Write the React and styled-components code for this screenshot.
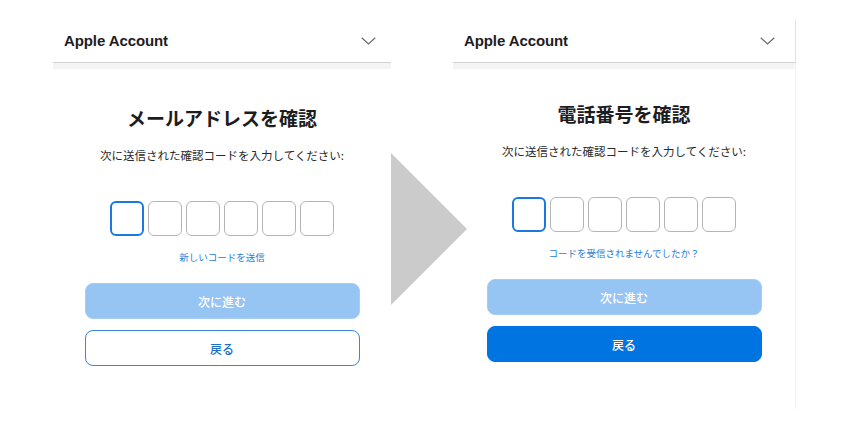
import styled, { createGlobalStyle } from "styled-components";

const GlobalStyle = createGlobalStyle`
    body {
        margin: 0;
        background: #ffffff;
        font-family: "Liberation Sans", "Noto Sans CJK JP", sans-serif;
    }
`

const screens = [
    {
        title: "メールアドレスを確認",
        link: "新しいコードを送信",
        top: 35,
        width: 338,
        padRight: 15,
        edge: false,
        backFilled: false,
    },
    {
        title: "電話番号を確認",
        link: "コードを受信されませんでしたか？",
        top: 31,
        width: 343,
        padRight: 20,
        edge: true,
        backFilled: true,
    },
];

function Chevron() {
    return (
        <svg width="15" height="8" viewBox="0 0 15 8">
            <path d="M0.7 0.7 L7.5 7 L14.3 0.7" fill="none" stroke="#6b6b6b" strokeWidth="1.2" />
        </svg>
    )
}

function Screen({ data }) {
    return (
        <Panel $width={data.width}>
            <Header $padRight={data.padRight} $edge={data.edge}>
                <Brand>Apple Account</Brand>
                <Chevron />
            </Header>
            <Band />
            <Body $top={data.top} $edge={data.edge}>
                <Title>{data.title}</Title>
                <Subtitle>次に送信された確認コードを入力してください:</Subtitle>
                <Codes>
                    {[0, 1, 2, 3, 4, 5].map((i) => (
                        <CodeBox key={i} $active={i === 0} />
                    ))}
                </Codes>
                <Link>{data.link}</Link>
                <Buttons>
                    <NextButton>次に進む</NextButton>
                    <BackButton $filled={data.backFilled}>戻る</BackButton>
                </Buttons>
            </Body>
        </Panel>
    )
}

export default function App() {
    return (
        <Page>
            <GlobalStyle />
            <Screen data={screens[0]} />
            <Arrow>
                <svg width="76" height="152" viewBox="0 0 76 152">
                    <polygon points="0,0 76,76 0,152" fill="#cbcbcb" />
                </svg>
            </Arrow>
            <Screen data={screens[1]} />
        </Page>
    )
}

const Page = styled.div`
    display: flex;
    align-items: flex-start;
    padding: 20px 0 0 53px;
    font-family: "Liberation Sans", "Noto Sans CJK JP", sans-serif;
`

const Panel = styled.div`
    width: ${(p) => p.$width}px;
    display: flex;
    flex-direction: column;
`

const Header = styled.div`
    height: 42px;
    display: flex;
    align-items: center;
    justify-content: space-between;
    padding: 0 ${(p) => p.$padRight}px 0 11px;
    border-bottom: 1px solid #d2d2d2;
    border-right: ${(p) => (p.$edge ? "1px solid #e2e2e2" : "none")};
`

const Brand = styled.span`
    font-size: 15px;
    font-weight: 700;
    color: #1d1d1f;
    letter-spacing: -0.1px;
    margin-top: -2px;
`

const Band = styled.div`
    height: 6px;
    background: #f4f4f4;
`

const Body = styled.div`
    height: 340px;
    box-sizing: border-box;
    display: flex;
    flex-direction: column;
    align-items: center;
    padding-top: ${(p) => p.$top}px;
    border-right: ${(p) => (p.$edge ? "1px solid #f1f1f1" : "none")};
`

const Title = styled.h1`
    margin: 0;
    font-family: "Noto Sans CJK JP", sans-serif;
    font-size: 19px;
    line-height: 28px;
    font-weight: 700;
    color: #1d1d1f;
`

const Subtitle = styled.p`
    margin: 14px 0 0;
    font-family: "Noto Sans CJK JP", sans-serif;
    font-size: 11.5px;
    line-height: 18px;
    color: #2a2a2a;
`

const Codes = styled.div`
    display: flex;
    gap: 4px;
    margin-top: 37px;
`

const CodeBox = styled.div`
    width: 34px;
    height: 35px;
    box-sizing: border-box;
    border-radius: 6px;
    border: ${(p) => (p.$active ? "2px solid #1a78e0" : "1px solid #b4b4b4")};
`

const Link = styled.span`
    margin-top: 14px;
    font-family: "Noto Sans CJK JP", sans-serif;
    font-size: 9.5px;
    line-height: 14px;
    color: #2a7bd6;
`

const Buttons = styled.div`
    display: flex;
    flex-direction: column;
    gap: 11px;
    margin-top: 19px;
`

const BaseButton = styled.button`
    width: 275px;
    height: 36px;
    box-sizing: border-box;
    border-radius: 8px;
    font-family: "Noto Sans CJK JP", sans-serif;
    font-size: 12px;
    font-weight: 500;
    cursor: pointer;
`

const NextButton = styled(BaseButton)`
    background: #96c4f3;
    border: 1px solid #a6cdf5;
    color: #ffffff;
`

const BackButton = styled(BaseButton)`
    background: ${(p) => (p.$filled ? "#0074e0" : "#ffffff")};
    border: 1px solid ${(p) => (p.$filled ? "#0074e0" : "#3a86da")};
    color: ${(p) => (p.$filled ? "#ffffff" : "#1f6fc9")};
`

const Arrow = styled.div`
    width: 76px;
    margin: 133px -14px 0 0;
    display: flex;
`
